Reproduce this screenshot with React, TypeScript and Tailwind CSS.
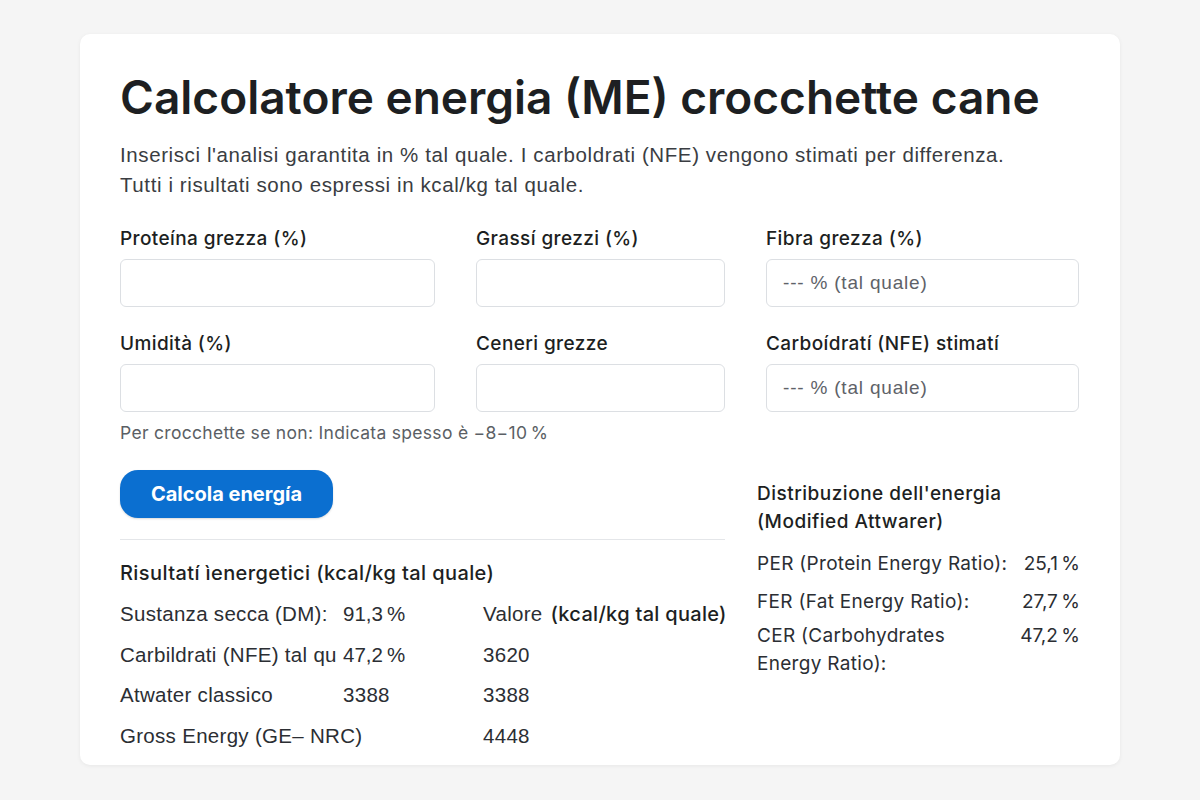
import React from 'react';

const inter = { fontFamily: 'Inter, "Noto Sans", sans-serif' };
const arial = { fontFamily: '"Liberation Sans", Arial, sans-serif' };

function Field({ label, placeholder }: { label: string; placeholder?: string }) {
  return (
    <div className="flex flex-col">
      <label className="mb-[9px] text-[19px] leading-[22px] font-medium tracking-[0.4px] text-[#1d1f22]">{label}</label>
      <input
        readOnly
        placeholder={placeholder}
        style={arial}
        className="h-[48px] w-full rounded-[6px] border border-[#dcdfe3] bg-white px-[16px] text-[19px] tracking-[0.8px] text-[#1d1f22] placeholder:text-[#5e6268] outline-none"
      />
    </div>
  );
}

const nbsp = '\u202F';

export default function App() {
  return (
    <div className="min-h-screen w-full bg-[#f5f5f5] pt-[34px] pb-[35px]" style={inter}>
      <div className="mx-auto h-[731px] w-[1040px] rounded-[10px] bg-white px-[40px] pt-[36px] shadow-[0_1px_4px_rgba(0,0,0,0.06)]">
        {/* Header */}
        <h1 className="text-[46px] leading-[54px] font-semibold text-[#1d1f22]">
          Calcolatore energia (ME) crocchette cane
        </h1>
        <p className="mt-[16px] text-[20.5px] leading-[30px] tracking-[0.6px] text-[#3a3d42]" style={arial}>
          Inserisci l'analisi garantita in % tal quale. I carboldrati (NFE) vengono stimati per differenza.
          <br />
          Tutti i risultati sono espressi in kcal/kg tal quale.
        </p>

        {/* Inputs */}
        <div className="mt-[28px] grid grid-cols-[315px_249px_313px] gap-x-[41px] gap-y-[26px]">
          <Field label="Proteína grezza (%)" />
          <Field label="Grassí grezzi (%)" />
          <Field label="Fibra grezza (%)" placeholder="--- % (tal quale)" />
          <Field label="Umidità (%)" />
          <Field label="Ceneri grezze" />
          <Field label="Carboídratí (NFE) stimatí" placeholder="--- % (tal quale)" />
        </div>
        <p className="mt-[11px] text-[17.5px] leading-[20px] tracking-[0.3px] text-[#5b5f65]">
          Per crocchette se non: Indicata spesso è −8−10{nbsp}%
        </p>

        <div className="mt-[27px] flex">
          {/* Left column: button and results */}
          <div className="w-[605px]">
            <button className="h-[48px] w-[213px] rounded-[18px] bg-[#0b6fd0] text-[20px] font-bold text-white shadow-[0_1px_2px_rgba(0,0,0,0.15)]">
              Calcola energía
            </button>
            <div className="mt-[21px] h-px bg-[#e4e6e9]" />
            <h3 className="mt-[21px] text-[20px] leading-[24px] font-medium tracking-[0.4px] text-[#1d1f22]">
              Risultatí ìenergetici (kcal/kg tal quale)
            </h3>
            <div
              className="mt-[14px] grid grid-cols-[223px_140px_1fr] auto-rows-[40.7px] text-[20.5px] tracking-[0.3px] text-[#2b2e33] whitespace-nowrap"
              style={arial}
            >
              <span>Sustanza secca (DM):</span>
              <span>91,3{nbsp}%</span>
              <span>
                Valore
                <span className="ml-[8px] text-[20px] font-medium tracking-[0.3px] text-[#1d1f22]" style={inter}>
                  (kcal/kg tal quale)
                </span>
              </span>
              <span className="overflow-hidden pr-[6px]">Carbildrati (NFE) tal qu</span>
              <span>47,2{nbsp}%</span>
              <span>3620</span>
              <span>Atwater classico</span>
              <span>3388</span>
              <span>3388</span>
              <span className="col-span-2">Gross Energy (GE– NRC)</span>
              <span>4448</span>
            </div>
          </div>

          {/* Right column: energy distribution */}
          <div className="mt-[10px] ml-[32px] w-[323px]">
            <h3 className="text-[19px] leading-[28px] font-medium tracking-[0.5px] text-[#1d1f22]">
              Distribuzione dell'energia
              <br />
              (Modified Attwarer)
            </h3>
            <div className="mt-[14px] flex flex-col text-[19px] leading-[28px] tracking-[0.3px] text-[#2b2e33]">
              <div className="flex justify-between">
                <span>PER (Protein Energy Ratio):</span>
                <span>25,1{nbsp}%</span>
              </div>
              <div className="mt-[10px] flex justify-between">
                <span>FER (Fat Energy Ratio):</span>
                <span>27,7{nbsp}%</span>
              </div>
              <div className="mt-[6px] flex justify-between">
                <span className="w-[200px]">CER (Carbohydrates Energy Ratio):</span>
                <span>47,2{nbsp}%</span>
              </div>
            </div>
          </div>
        </div>
      </div>
    </div>
  );
}
